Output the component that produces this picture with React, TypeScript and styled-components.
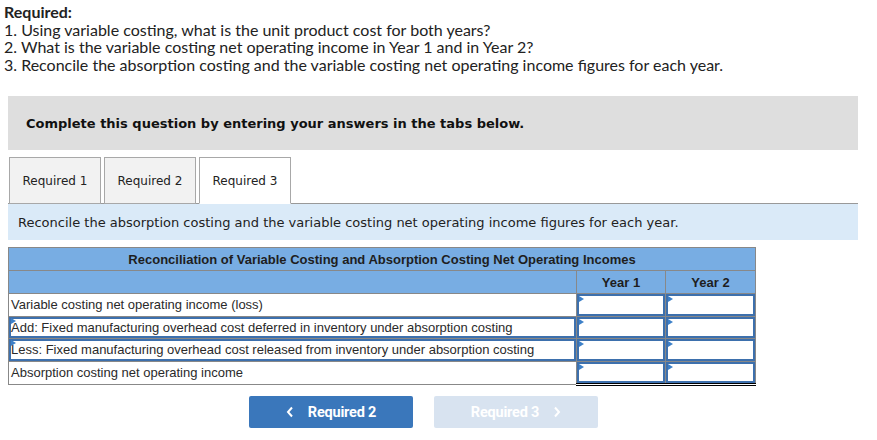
import React from "react";
import styled, { createGlobalStyle } from "styled-components";

const Global = createGlobalStyle`
  html, body { margin: 0; padding: 0; background: #fff; }
  body { font-family: "Liberation Sans", Arial, sans-serif; }
`;

const Page = styled.div`
  width: 877px;
`;

const Required = styled.div`
  font-family: Lato, "Liberation Sans", sans-serif;
  font-size: 16px;
  line-height: 17.5px;
  color: #222;
  padding: 3px 4px 0 4px;
  & b { font-weight: 700; }
`;

const Banner = styled.div`
  margin: 23px 19px 0 8px;
  height: 54px;
  background: #dedede;
  display: flex;
  align-items: center;
  padding-left: 18px;
  font-family: "DejaVu Sans", Verdana, sans-serif;
  font-weight: 700;
  font-size: 13px;
  color: #111;
`;

const TabsRow = styled.div`
  display: flex;
  gap: 3px;
  margin: 7px 0 0 9px;
  align-items: flex-end;
`;

const Tab = styled.div<{ $active?: boolean }>`
  width: 92px;
  height: 47px;
  box-sizing: border-box;
  border: 1px solid #a8a8a8;
  border-bottom: ${(p) => (p.$active ? "1px solid #fff" : "1px solid #a8a8a8")};
  background: ${(p) => (p.$active ? "#fff" : "#f2f2f2")};
  display: flex;
  align-items: center;
  justify-content: center;
  font-family: "DejaVu Sans", Verdana, sans-serif;
  font-size: 12px;
  color: #222;
  margin-bottom: -1px;
  position: relative;
  z-index: 1;
`;

const Instruction = styled.div`
  margin: 0 19px 0 8px;
  border-top: 1px solid #999;
  background: #daeaf8;
  height: 36px;
  display: flex;
  align-items: center;
  padding-left: 10px;
  font-family: "DejaVu Sans", Verdana, sans-serif;
  font-size: 13px;
  color: #222;
`;

const Table = styled.table`
  margin: 7px 0 0 8px;
  border-collapse: collapse;
  width: 747px;
  table-layout: fixed;
  font-family: "Liberation Sans", Arial, sans-serif;
  font-size: 13px;
  color: #2a2a2a;
`;

const HeadCell = styled.th`
  background: #78ade3;
  border: 1px solid #888;
  height: 22px;
  padding: 0;
  font-weight: 700;
  font-size: 13px;
  text-align: center;
  color: #1e1e1e;
`;

const Label = styled.td<{ $input?: boolean }>`
  border: 1px solid #888;
  height: 21.5px;
  padding: 0 2px;
  background: #fff;
  position: relative;
  white-space: nowrap;
  box-shadow: ${(p) => (p.$input ? "inset 0 0 0 2px #3d70ad" : "none")};
  &::before {
    content: "";
    display: ${(p) => (p.$input ? "block" : "none")};
    position: absolute;
    left: 2px;
    top: 1px;
    border-top: 3px solid transparent;
    border-bottom: 3px solid transparent;
    border-left: 5px solid #3d80c8;
  }
`;

const InputCell = styled.td<{ $total?: boolean }>`
  border: 1px solid #888;
  ${(p) => (p.$total ? "border-bottom: 3px double #000; border-top: 1px solid #000;" : "")}
  height: 21.5px;
  padding: 0;
  background: #fff;
  position: relative;
  box-shadow: inset 0 0 0 2px #3d70ad;
  &::before {
    content: "";
    position: absolute;
    left: 2px;
    top: 2px;
    border-top: 3px solid transparent;
    border-bottom: 3px solid transparent;
    border-left: 5px solid #3d80c8;
  }
`;

const Nav = styled.div`
  display: flex;
  gap: 21px;
  margin: 10px 0 0 249px;
`;

const NavButton = styled.div<{ $disabled?: boolean }>`
  width: 164px;
  height: 32px;
  border-radius: 2px;
  background: ${(p) => (p.$disabled ? "#d8e3f0" : "#3a77bb")};
  color: #fff;
  display: flex;
  align-items: center;
  justify-content: center;
  gap: 14px;
  font-family: Roboto, "Liberation Sans", sans-serif;
  font-weight: 700;
  font-size: 14.5px;
  letter-spacing: -0.2px;
`;

const Chevron = ({ dir }: { dir: "left" | "right" }) => (
  <svg width="8" height="12" viewBox="0 0 8 12">
    <path
      d={dir === "left" ? "M6 1.5 L2 6 L6 10.5" : "M2 1.5 L6 6 L2 10.5"}
      fill="none"
      stroke="#fff"
      strokeWidth="2"
    />
  </svg>
);

const rows = [
  { label: "Variable costing net operating income (loss)", input: false },
  { label: "Add: Fixed manufacturing overhead cost deferred in inventory under absorption costing", input: true },
  { label: "Less: Fixed manufacturing overhead cost released from inventory under absorption costing", input: true },
  { label: "Absorption costing net operating income", input: false, total: true },
];

export default function App() {
  return (
    <Page>
      <Global />
      <Required>
        <b>Required:</b>
        <div>1. Using variable costing, what is the unit product cost for both years?</div>
        <div>2. What is the variable costing net operating income in Year 1 and in Year 2?</div>
        <div>3. Reconcile the absorption costing and the variable costing net operating income figures for each year.</div>
      </Required>
      <Banner>Complete this question by entering your answers in the tabs below.</Banner>
      <TabsRow>
        <Tab>Required 1</Tab>
        <Tab>Required 2</Tab>
        <Tab $active>Required 3</Tab>
      </TabsRow>
      <Instruction>
        Reconcile the absorption costing and the variable costing net operating income figures for each year.
      </Instruction>
      <Table>
        <colgroup>
          <col style={{ width: 568 }} />
          <col style={{ width: 89 }} />
          <col style={{ width: 90 }} />
        </colgroup>
        <thead>
          <tr>
            <HeadCell colSpan={3}>Reconciliation of Variable Costing and Absorption Costing Net Operating Incomes</HeadCell>
          </tr>
          <tr>
            <HeadCell />
            <HeadCell>Year 1</HeadCell>
            <HeadCell>Year 2</HeadCell>
          </tr>
        </thead>
        <tbody>
          {rows.map((r) => (
            <tr key={r.label}>
              <Label $input={r.input}>{r.label}</Label>
              <InputCell $total={r.total} />
              <InputCell $total={r.total} />
            </tr>
          ))}
        </tbody>
      </Table>
      <Nav>
        <NavButton>
          <Chevron dir="left" />
          Required 2
        </NavButton>
        <NavButton $disabled>
          Required 3
          <Chevron dir="right" />
        </NavButton>
      </Nav>
    </Page>
  );
}
